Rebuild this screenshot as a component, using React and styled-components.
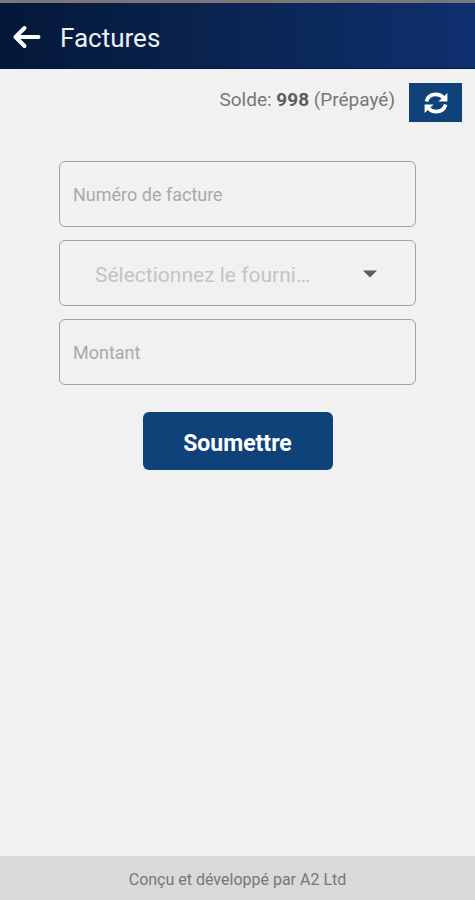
import React, { useState } from "react";
import styled, { createGlobalStyle } from "styled-components";

const GlobalStyle = createGlobalStyle`
  *, *::before, *::after { box-sizing: border-box; }
  body {
    margin: 0;
    background: #f1f1f1;
    font-family: Roboto, "Liberation Sans", sans-serif;
  }
  button, input, select { font-family: inherit; }
`;

const Screen = styled.div`
  display: flex;
  flex-direction: column;
  min-height: 100vh;
  background: #f1f1f1;
`;

const AppBar = styled.header`
  display: flex;
  align-items: center;
  gap: 19px;
  height: 69px;
  padding: 2px 12px 0;
  border-top: 3px solid #7b7778;
  border-bottom: 1px solid #02154a;
  background: linear-gradient(90deg, #041738 0%, #0a2450 45%, #0f306f 100%);
`;

const BackButton = styled.button`
  display: flex;
  padding: 0;
  border: 0;
  background: none;
  color: #fff;
  cursor: pointer;
`;

const Title = styled.h1`
  margin: 0;
  padding-top: 2px;
  color: #eef1f6;
  font-size: 26px;
  font-weight: 400;
  line-height: 32px;
`;

const BalanceRow = styled.div`
  display: flex;
  align-items: center;
  justify-content: flex-end;
  gap: 14px;
  padding: 14px 13px 0;
`;

const Balance = styled.p`
  margin: 0;
  padding-bottom: 6px;
  color: #777;
  font-size: 19px;
  line-height: 24px;

  strong {
    color: #5c5c5c;
    font-weight: 700;
  }
`;

const RefreshButton = styled.button`
  display: flex;
  align-items: center;
  justify-content: center;
  width: 53px;
  height: 39px;
  padding: 0;
  border: 0;
  background: #10427a;
  color: #fff;
  cursor: pointer;
`;

const Form = styled.form`
  display: flex;
  flex: 1;
  flex-direction: column;
  align-items: center;
  gap: 13px;
  padding: 39px 59px;
`;

const FieldBox = styled.label`
  display: flex;
  align-items: center;
  width: 100%;
  height: 66px;
  padding: ${({ $inset }) => ($inset ? "2px 38px 0 35px" : "0 13px")};
  border: 1px solid #a3a3a3;
  border-radius: 6px;
`;

const TextInput = styled.input`
  width: 100%;
  height: 100%;
  padding: 0;
  border: 0;
  outline: 0;
  background: none;
  color: #555;
  font-size: 18px;

  &::placeholder {
    color: #a9a9a9;
    opacity: 1;
  }
`;

const Picker = styled.select`
  flex: 1;
  min-width: 0;
  height: 100%;
  margin-right: 48px;
  padding: 2px 0 0;
  overflow: hidden;
  border: 0;
  outline: 0;
  appearance: none;
  background: none;
  color: ${({ $empty }) => ($empty ? "#c4c4c6" : "#555")};
  font-size: 21px;
  text-overflow: ellipsis;
  white-space: nowrap;
`;

const SubmitButton = styled.button`
  width: 190px;
  height: 58px;
  margin-top: 14px;
  padding: 4px 0 0;
  border: 0;
  border-radius: 6px;
  background: #10427a;
  color: #fff;
  font-size: 23px;
  font-weight: 700;
  cursor: pointer;
`;

const Footer = styled.footer`
  padding: 14px 12px 10px;
  background: #d9d9d9;
  color: #777;
  font-size: 16px;
  line-height: 20px;
  text-align: center;
`;

function BackArrow() {
  return (
    <svg width="29" height="24" viewBox="0 0 29 24" fill="none" stroke="currentColor" strokeWidth="4" strokeLinecap="round" strokeLinejoin="round" aria-hidden="true">
      <path d="M26.5 12H4M12.5 3L3.5 12L12.5 21" />
    </svg>
  );
}

function RefreshIcon() {
  return (
    <svg width="24" height="22" viewBox="0 0 24 22" aria-hidden="true">
      <g fill="none" stroke="currentColor" strokeWidth="3.6">
        <path d="M2.4 9.5C3.4 5 7.2 2.4 12 2.4C15.2 2.4 17.6 3.6 19.6 5.8" />
        <path d="M21.6 12.5C20.6 17 16.8 19.6 12 19.6C8.8 19.6 6.4 18.4 4.4 16.2" />
      </g>
      <path d="M23.4 1V9.4H14.4ZM0.6 21V12.6H9.6Z" fill="currentColor" />
    </svg>
  );
}

function Caret() {
  return (
    <svg width="14" height="8" viewBox="0 0 14 8" aria-hidden="true">
      <path d="M0 0.5H14L7 7.5Z" fill="#5c5c5c" />
    </svg>
  );
}

export default function App() {
  const [provider, setProvider] = useState("");

  return (
    <>
      <GlobalStyle />
      <Screen>
        <AppBar>
          <BackButton type="button" aria-label="Retour">
            <BackArrow />
          </BackButton>
          <Title>Factures</Title>
        </AppBar>
        <BalanceRow>
          <Balance>
            Solde: <strong>998</strong> (Prépayé)
          </Balance>
          <RefreshButton type="button" aria-label="Actualiser">
            <RefreshIcon />
          </RefreshButton>
        </BalanceRow>
        <Form onSubmit={(event) => event.preventDefault()}>
          <FieldBox>
            <TextInput type="text" placeholder="Numéro de facture" aria-label="Numéro de facture" />
          </FieldBox>
          <FieldBox $inset>
            <Picker
              aria-label="Fournisseur"
              value={provider}
              $empty={provider === ""}
              onChange={(event) => setProvider(event.target.value)}
            >
              <option value="">Sélectionnez le fournisseur</option>
            </Picker>
            <Caret />
          </FieldBox>
          <FieldBox>
            <TextInput type="text" inputMode="decimal" placeholder="Montant" aria-label="Montant" />
          </FieldBox>
          <SubmitButton type="submit">Soumettre</SubmitButton>
        </Form>
        <Footer>Conçu et développé par A2 Ltd</Footer>
      </Screen>
    </>
  );
}
